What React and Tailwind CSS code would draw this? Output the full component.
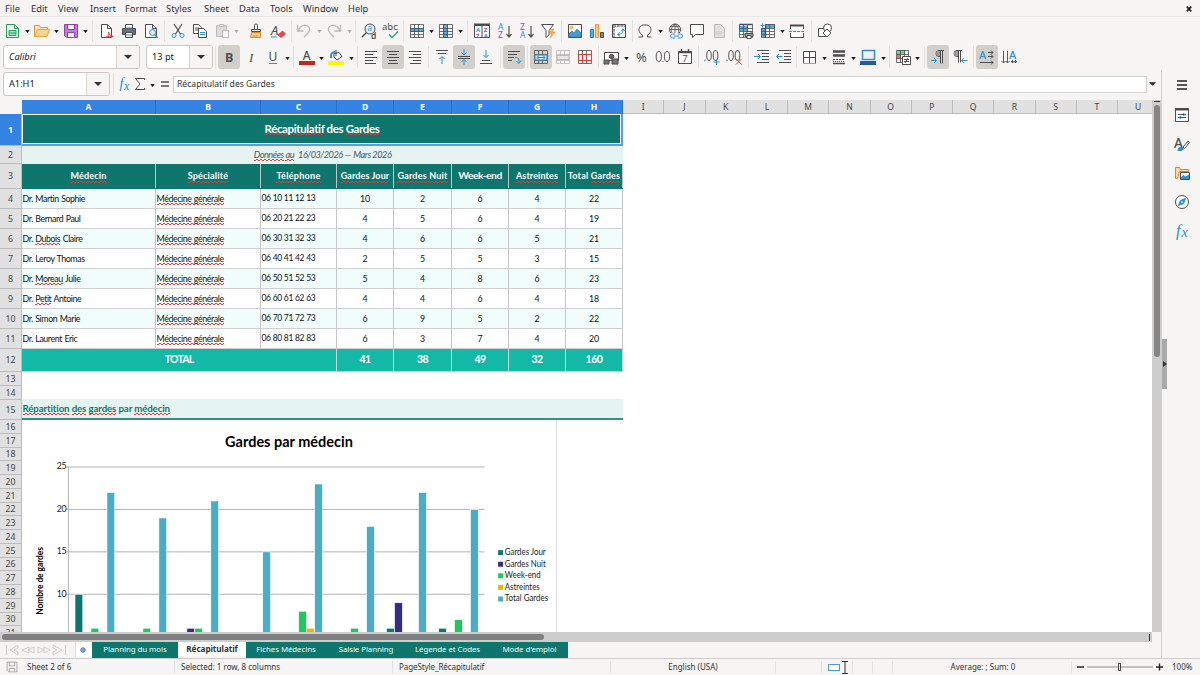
import React from "react";

const D = "#4d4d4f";
const B = "#2f8fd0";
const P = "#a349b8";

function Ic({ children, className = "" }) {
  return (
    <svg viewBox="0 0 16 16" className={"h-4 w-4 shrink-0 overflow-visible " + className} fill="none" stroke={D} strokeWidth="1">
      {children}
    </svg>
  );
}
function Btn({ on, children, dim, className = "w-[22px]" }) {
  return (
    <div className={"flex h-6 shrink-0 items-center justify-center rounded-[3px] " + className + (on ? " bg-[#d2cfcb]" : "") + (dim ? " opacity-35" : "")}>
      {children}
    </div>
  );
}
function Arr({ dim, className = "w-[7px]" }) {
  return (
    <div className={"flex h-6 shrink-0 items-center justify-center " + className + (dim ? " opacity-30" : "")}>
      <svg viewBox="0 0 6 4" className="mt-0.5 h-[3px] w-[5px]"><path d="M0 0h6L3 4z" fill="#111" /></svg>
    </div>
  );
}
function Sep({ className }) {
  return <div className={"flex h-[22px] shrink-0 justify-center " + className}><div className="w-px bg-[#e2e0de]" /></div>;
}
const T = ({ x, y, s = 8, c = D, f = "Noto Sans, sans-serif", w = 400, i, children }) => (
  <text x={x} y={y} fontSize={s} fill={c} stroke="none" fontFamily={f} fontWeight={w} fontStyle={i ? "italic" : "normal"}>{children}</text>
);
const Grid = ({ c = D }) => <path d="M1.500 1.500h13v13h-13zM1.500 5.500h13M1.500 8.500h13M1.500 11.500h13M5.500 1.500v13M9.500 1.500v13" stroke={c} strokeWidth=".8" />;

function Toolbar1() {
  return (
    <div className="flex h-[27px] shrink-0 items-center pl-0.5">
      <Btn><Ic><path d="M1.500 1.500h8l4 4v9h-12zM9.500 1.500v4h4" stroke="#27a05a" fill="#fff" /><path d="M4 7.500h7v5H4zM4 10h7" stroke="#27a05a" fill="#a6dfb8" /></Ic></Btn><Arr />
      <Btn><Ic><path d="M.5 13.500v-11h5l1 2h7v2" fill="#fbe3bd" stroke="#e09a3c" /><path d="M.7 13.500L3.500 6.500h12l-2.500 7z" fill="#fcd28f" stroke="#e5a34a" /></Ic></Btn><Arr />
      <Btn><Ic><path d="M1.500 1.500h13v13h-11l-2-2z" fill="#c17bd0" stroke="#953fab" /><path d="M4.500 1.500h7v5h-7zM4.500 14v-4.500h7V14" fill="#fff" stroke="#953fab" /></Ic></Btn><Arr />
      <Sep className="w-[7px]" />
      <Btn><Ic><path d="M2.500 1.500h6l4 4v9h-10zM8.500 1.500v4h4" fill="#fff" /><path d="M7 14.500c3-2 3-4 2.500-5.500M9.500 9c.5 2.500 2 4 5 4.500M7 14.500c2-1.500 5-1.500 7-1" stroke="#e0383f" /></Ic></Btn>
      <Btn><Ic><path d="M4.500 5v-3.500h7V5" fill="#fff" /><path d="M1.500 5.500h13v6h-13z" fill="#6c7077" /><path d="M4.500 9.500h7v5h-7z" fill="#fff" /><path d="M5 12h6M5 5h6" stroke={B} /></Ic></Btn>
      <Btn><Ic><path d="M2.500 1.500h7l4 4v9h-11zM9.500 1.500v4h4" fill="#fff" /><circle cx="9.500" cy="9.500" r="3" stroke={B} fill="#d9edf9" /><path d="M11.700 11.700l3 3" stroke={B} strokeWidth="1.400" /></Ic></Btn>
      <Sep className="w-[5px]" />
      <Btn><Ic><path d="M4 1l6.500 10M12 1L5.500 11" stroke={D} strokeWidth="1.200" /><circle cx="4" cy="12.500" r="2" stroke={B} /><circle cx="12" cy="12.500" r="2" stroke={B} /></Ic></Btn>
      <Btn><Ic><path d="M1.500 1.500h5l3 3v6h-8zM3 5h4M3 7h4" fill="#fff" /><path d="M6.500 5.500h5l3 3v6h-8z" fill="#fff" /><path d="M8 9.500h5M8 11.500h5" stroke={B} /></Ic></Btn>
      <Btn dim><Ic><path d="M2.500 2.500h10v11h-10z" fill="#aaa" /><path d="M5.500 1.500h4v2h-4zM8.500 7.500h6v7h-6z" fill="#fff" /></Ic></Btn><Arr dim />
      <div className="w-[5px] shrink-0" />
      <Btn><Ic><path d="M6.500 6.500v-4a1.500 1.500 0 013 0v4M3.500 6.500h9v2h-9z" /><path d="M3.500 9.500h9v5h-10zM6 14v-2M9 14v-2" fill="#fbc988" stroke="#e08a2c" /></Ic></Btn>
      <Btn><Ic><T x="1" y="11.500" s="13" i>A</T><path d="M1 14h6" stroke={B} /><path d="M8 12l4.500-4 3 3-4.500 3.500z" fill="#e8484a" stroke="#d6363a" strokeWidth=".8" /></Ic></Btn>
      <Sep className="w-[4px]" />
      <Btn dim><Ic><path d="M1.500 2v6h6M1.500 8C4 4 7 1.500 10.500 2.500c4 1.300 4 5 1.500 7.500l-4 4" strokeWidth="1.300" /></Ic></Btn><Arr dim className="w-2" />
      <Btn dim><Ic><path d="M14.500 2v6h-6M14.500 8C12 4 9 1.500 5.500 2.500c-4 1.300-4 5-1.500 7.500l4 4" strokeWidth="1.300" /></Ic></Btn><Arr dim className="w-2" />
      <Sep className="w-[5px]" />
      <Btn><Ic><circle cx="9" cy="6" r="5" fill="#e3f2fb" /><path d="M5.500 9.500L1 14" strokeWidth="1.500" /><T x="6.300" y="8.300" s="8.500" c={B}>a</T><T x="10" y="15.500" s="8.500" w="600">d</T></Ic></Btn>
      <Btn className="w-[21px]"><Ic><T x="-1" y="7" s="9.500">abc</T><path d="M6 11.500l3 3 6-6" stroke="#27a86b" strokeWidth="1.300" /></Ic></Btn>
      <Sep className="w-[5px]" />
      <Btn><Ic><path d="M1 5h14v4H1z" fill="#55a9e0" stroke="none" /><Grid /></Ic></Btn><Arr />
      <Btn><Ic><path d="M5 1h5v14H5z" fill="#55a9e0" stroke="none" /><Grid /></Ic></Btn><Arr />
      <Sep className="w-[6px]" />
      <Btn className="w-[23px]"><Ic><path d="M.5 2.500h15v12H.5zM8 3v12" fill="#fff" /><path d="M0 1.500h16" strokeWidth="2" /><T x="2" y="8.500" s="6" c={B} w="700">A</T><T x="2" y="14.500" s="6" c={P} w="700">Z</T><T x="9.700" y="8.500" s="6" c={P} w="700">Z</T><T x="9.700" y="14.500" s="6" c={B} w="700">A</T></Ic></Btn>
      <Btn className="w-[23px]"><Ic><T x="1" y="7" s="8.500" c={B}>A</T><T x="1" y="15" s="8.500" c={P}>Z</T><path d="M12 3v11M9.500 11L12 14l2.500-3" strokeWidth="1.200" /></Ic></Btn>
      <Btn className="w-[21px]"><Ic><T x="1" y="7" s="8.500" c={P}>Z</T><T x="1" y="15" s="8.500" c={B}>A</T><path d="M12 3v11M9.500 11L12 14l2.500-3" strokeWidth="1.200" /></Ic></Btn>
      <Btn><Ic><path d="M1.500 1.500h12L9 7.500V12l-3 2.500v-7z" fill="#fff" /><path d="M12 6l-3 5h3l-2 4 5-6h-3l2-3z" fill="#f7b25c" stroke="#e88b28" strokeWidth=".6" /></Ic></Btn>
      <Sep className="w-[5px]" />
      <Btn><Ic><path d="M1.500 1.500h13v13h-13z" fill="#fff" /><path d="M2 14V11l3-3 2 2 3-4 4 4v4z" fill="#3f9bd8" stroke="#2b79b4" strokeWidth=".7" /><circle cx="4.500" cy="4.500" r="1.300" stroke="#e59836" fill="#ffd08a" /></Ic></Btn>
      <Btn><Ic><path d="M1.500 6.500h3v8h-3z" fill="#5cb1e8" stroke="#2b79b4" /><path d="M6.500 1.500h3v13h-3z" fill="#fbc97e" stroke="#e59836" /><path d="M11.500 9.500h3v5h-3z" fill="#888" /></Ic></Btn>
      <Btn><Ic><path d="M1.500 1.500h13v13h-13z" fill="#fff" /><path d="M2 3h12M3 2v12" strokeWidth="2" stroke="#999" strokeDasharray="3 .7" /><path d="M7 11.500c4 0 5-2 5-5M10 8.500L12 6l2 2.500M9 9.500l-2.500 2L9 13.500" stroke={B} /></Ic></Btn>
      <Sep className="w-[4px]" />
      <Btn><Ic><path d="M1.500 14h4v-2C2 10 1.500 7 2.500 4.500 4 1 12 1 13.500 4.500c1 2.500.5 5.500-3 7.500v2h4" /></Ic></Btn><Arr className="w-2" />
      <Btn className="w-[22px]"><Ic><circle cx="8" cy="6.500" r="5.500" /><path d="M2.500 6.500h11M8 1v10M4 3.500h8M5.500 11c-2-3-1.500-7 2.500-10 4 3 4.500 7 2.500 10" strokeWidth=".8" /><path d="M3 10h13v6H3z" fill="#f6f5f4" stroke="none" /><path d="M8 11H5.500a1.700 1.700 0 000 4H8M11 11h2.500a1.700 1.700 0 010 4H11M7 13h5" stroke={B} /></Ic></Btn>
      <Btn><Ic><path d="M1.500 1.500h13v10h-8l-3 3v-3h-2z" fill="#fff" /></Ic></Btn>
      <Btn dim><Ic><path d="M3.500 1.500h6l4 4v9h-10z" fill="#bbb" /><path d="M5 9h6M5 11h6" strokeWidth=".6" /></Ic></Btn>
      <Sep className="w-[5px]" />
      <Btn><Ic><path d="M1 3h9v5H1z" fill="#55a9e0" stroke="none" /><Grid /><path d="M1.500 1.500h13" strokeWidth="1.500" /><path d="M7 10.500h8v3H7z" fill="#9aa3aa" /><path d="M9 8.500h4v2H9zM9 12.500h4v3H9z" fill="#fff" /></Ic></Btn>
      <Btn className="w-[21px]"><Ic><path d="M5 1h10v4H5zM1 5h4v9H1z" fill="#55a9e0" stroke="none" /><Grid /><path d="M5.500 2.500v12" strokeWidth="1.300" /><path d="M0 0h5v5H0z" fill="#f6f5f4" stroke="none" /><path d="M2.500.5v4M.5 2.500h4" stroke={B} /></Ic></Btn><Arr className="w-2" />
      <Btn><Ic><path d="M1.500 6V2.500h13V6M1.500 10v4.500h13V10" fill="#fff" /><path d="M1 2.500h14" strokeWidth="2" /><path d="M0 8.500h16" stroke={B} strokeDasharray="3 1" /></Ic></Btn>
      <Sep className="w-[6px]" />
      <Btn><Ic><path d="M1.500 5.500h7v8h-7z" fill="#fff" /><circle cx="10.500" cy="5" r="4" fill="#fff" /><path d="M6 10l4-4 4 4-4 4z" fill="#fff" /></Ic></Btn>
    </div>
  );
}

function Combo({ text, fieldClass, className }) {
  return (
    <div className={"flex h-[24px] shrink-0 overflow-hidden rounded-[3px] border border-[#cdc7c2] bg-white " + className}>
      <div className={"flex items-center border-r border-[#d9d5d1] pl-[5px] text-[9.200px] leading-none text-[#222] " + fieldClass}>{text}</div>
      <div className="flex flex-1 items-center justify-center bg-[#f6f5f4]">
        <svg viewBox="0 0 8 4" className="h-1 w-2"><path d="M0 0h8L4 4z" fill="#2e3436" /></svg>
      </div>
    </div>
  );
}

const lines = (arr) => arr.map(([a, y, b], i) => <path key={i} d={`M${a} ${y}h${b}`} />);

function Toolbar2() {
  return (
    <div className="flex h-[26px] shrink-0 items-center pl-[3px]">
      <Combo text={<i>Calibri</i>} fieldClass="w-[113px]" className="w-[137px]" />
      <Combo text="13 pt" fieldClass="w-[43px]" className="ml-1.5 w-[67px]" />
      <Sep className="w-[5px]" />
      <Btn on><Ic><T x="3.900" y="12.600" s="12.500" w="700">B</T></Ic></Btn>
      <Btn><Ic><T x="6" y="12.500" s="13" i f="Liberation Serif, serif">I</T></Ic></Btn>
      <Btn className="w-[21px]"><Ic><T x="3.500" y="12" s="12">U</T><path d="M4 14.500h8" stroke={B} /></Ic></Btn><Arr className="w-2" />
      <Sep className="w-[5px]" />
      <Btn className="w-[21px]"><Ic><T x="3.800" y="11" s="12" w="500">A</T><path d="M0 14h16" stroke="#c2261d" strokeWidth="4" /></Ic></Btn><Arr className="w-[8px]" />
      <Btn><Ic><path d="M6 4.500l5-1 3 4-5 3.500-3-3zM8 1v6" fill="#fff" /><path d="M7 3C4 3 2.500 5 3 9" stroke={B} strokeWidth="2" /><path d="M0 14h16" stroke="#fdf500" strokeWidth="4" /></Ic></Btn><Arr className="w-2" />
      <Sep className="w-[5px]" />
      <Btn><Ic>{lines([[2, 2.5, 12], [2, 5.5, 8], [2, 8.5, 12], [2, 11.5, 8], [2, 14.5, 11]])}</Ic></Btn>
      <Btn on><Ic>{lines([[2, 2.5, 12], [4, 5.5, 8], [2, 8.5, 12], [4, 11.5, 8], [3, 14.5, 10]])}</Ic></Btn>
      <Btn><Ic>{lines([[2, 2.5, 12], [6, 5.5, 8], [2, 8.5, 12], [6, 11.5, 8], [3, 14.5, 11]])}</Ic></Btn>
      <Sep className="w-[5px]" />
      <Btn><Ic>{lines([[2, 1.5, 12], [4, 4.5, 8]])}<path d="M8 15V8M5.500 10L8 7.500l2.500 2.500" stroke={B} /></Ic></Btn>
      <Btn on><Ic>{lines([[2, 7.5, 12], [2, 9.5, 12]])}<path d="M8 0v5.500M5.500 3.500L8 6l2.500-2.500M8 16v-5M5.500 13L8 10.500l2.500 2.500" stroke={B} /></Ic></Btn>
      <Btn><Ic>{lines([[4, 11.5, 8], [2, 14.5, 12]])}<path d="M8 1v7M5.500 6L8 8.500 10.500 6" stroke={B} /></Ic></Btn>
      <Sep className="w-[6px]" />
      <Btn on><Ic>{lines([[2, 2.5, 12], [2, 5.5, 9], [2, 8.5, 6], [2, 11.5, 4]])}<path d="M9 8.500c4 0 4 1 4 5M10.500 12l2.500 2.500 2-3" stroke={B} /></Ic></Btn>
      <Sep className="w-[5px]" />
      <Btn on><Ic><Grid /><path d="M2 6h12v5H2z" fill="#cfe8f8" stroke={B} /><path d="M4 8.500h8M6 6.500l-2 2 2 2M10 6.500l2 2-2 2" stroke={B} /></Ic></Btn>
      <Btn dim><Ic><Grid /><path d="M2 6.500h12v4H2z" fill="#ccc" /></Ic></Btn>
      <Btn><Ic><Grid /><path d="M1.500 5.500h13v6h-13zM5.500 5v7M9.500 5v7" fill="#fff" stroke="#dc3c3c" /></Ic></Btn>
      <Sep className="w-[4px]" />
      <Btn><Ic><path d="M1.500 3.500h14v8h-14z" fill="#fff" /><circle cx="8.500" cy="7.500" r="2.200" fill="#666" /><path d="M1 11h5v4H1zM9 10h6v5H9z" fill="#777" /></Ic></Btn><Arr className="w-[9px]" />
      <Btn className="w-[21px]"><Ic><T x="2" y="12.600" s="13">%</T></Ic></Btn>
      <Btn><Ic><ellipse cx="3.800" cy="7.500" rx="2.600" ry="5" /><ellipse cx="12" cy="7.500" rx="2.600" ry="5" /><path d="M7.500 12.500h1" /></Ic></Btn>
      <Btn><Ic><path d="M1.500 2.500h13v12h-13z" fill="#fff" /><path d="M1.500 3.500h13M4.500 0v3M11.500 0v3" strokeWidth="1.500" /><T x="5.300" y="13" s="9.500">7</T></Ic></Btn>
      <Sep className="w-[5px]" />
      <Btn><Ic><ellipse cx="5" cy="6.500" rx="2.300" ry="5" /><ellipse cx="11.500" cy="6.500" rx="2.300" ry="5" /><path d="M.5 11.500h1" strokeWidth="1.300" /><path d="M9.500 13h6M12.500 10v6" stroke={B} /></Ic></Btn>
      <Btn><Ic><ellipse cx="5" cy="6.500" rx="2.300" ry="5" /><ellipse cx="11.500" cy="6.500" rx="2.300" ry="5" /><path d="M.5 11.500h1" strokeWidth="1.300" /><path d="M10 10l5.500 5.500M15.500 10L10 15.500" stroke="#e0383f" /></Ic></Btn>
      <Sep className="w-[6px]" />
      <Btn><Ic>{lines([[3, 1.5, 12], [8, 4.5, 7], [8, 7.5, 7], [8, 10.5, 7], [3, 13.5, 12]])}<path d="M0 7.500h6M4 5l2.500 2.500L4 10" stroke={B} /></Ic></Btn>
      <Btn><Ic>{lines([[3, 1.5, 12], [8, 4.5, 7], [8, 7.5, 7], [8, 10.5, 7], [3, 13.5, 12]])}<path d="M.5 7.500h6M3 5L.5 7.500 3 10" stroke={B} /></Ic></Btn>
      <Sep className="w-[3px]" />
      <Btn><Ic><path d="M2.500 2.500h12v12h-12zM8.500 2.500v12M2.500 8.500h12" fill="#fff" /><path d="M2 14.500h13" stroke="#e59836" /></Ic></Btn><Arr className="w-2" />
      <Btn><Ic><path d="M2 2.500h12M2 6.500h12" strokeWidth="2.500" /><path d="M2 10.500h12" strokeDasharray="2 1" /><path d="M2 12.500h12" strokeDasharray="1 1" /><path d="M2 14.500h12" strokeWidth="1.500" /></Ic></Btn><Arr />
      <Btn><Ic><path d="M2.500 1.500h12v9h-12z" fill="#eef3f7" stroke="#3d8bc6" strokeWidth="1.500" /><path d="M0 14h16" stroke="#215d9b" strokeWidth="4" /></Ic></Btn><Arr className="w-2" />
      <Sep className="w-[5px]" />
      <Btn><Ic><path d="M2 1h8v4H2z" fill="#74d391" stroke="none" /><path d="M2 5h4v5H2z" fill="#f07070" stroke="none" /><path d="M1.500 1.500h12v12h-12zM1.500 5.500h12M1.500 9.500h12M5.500 1.500v12M9.500 1.500v12" strokeWidth=".8" /><path d="M7.500 7.500h8v8h-8z" fill="#fff" /><path d="M9 10.500h5M9 12.500h5M13 9l-3 5" /></Ic></Btn><Arr />
      <Sep className="w-[6px]" />
      <Btn on><Ic><path d="M14 1.500H9a3 3 0 000 6h1M10.500 1.500v13M12.500 1.500v13" /><path d="M7 2a3 3 0 003 5V2z" fill="#999" stroke="none" /><path d="M1 11.500h5M4 9l2.500 2.500L4 14" stroke={B} /></Ic></Btn>
      <Btn><Ic><path d="M10 1.500H5a3 3 0 000 6h1M6.500 1.500v12M8.500 1.500v12" /><path d="M3 2a3 3 0 003 5V2z" fill="#999" stroke="none" /><path d="M9.500 11.500h6M12 9l-2.500 2.500L12 14" stroke={B} /></Ic></Btn>
      <Sep className="w-[5px]" />
      <Btn on><Ic><T x="0" y="9.500" s="11" c={B} w="500">A</T><path d="M9 3.500h5M9 7.500h5M1 13.500h13M12 1.500l2 2-2 2M12 5.500l2 2-2 2M12 11.500l2 2-2 2" /></Ic></Btn>
      <Btn><Ic><T x="8" y="9.500" s="11" c={B} w="500">A</T><path d="M2.500 2v12M6.500 2v12M11.500 11v3M14.500 11v3M.5 12l2 2 2-2M4.800 12l1.700 2 2-2M10 12l1.500 2 1.500-2 1.500 2 1.500-2" strokeWidth=".9" /></Ic></Btn>
    </div>
  );
}

const COLS = [["A", "w-[134px]"], ["B", "w-[105px]"], ["C", "w-[76px]"], ["D", "w-[57px]"], ["E", "w-[58px]"], ["F", "w-[57px]"], ["G", "w-[57px]"], ["H", "w-[57px]"]];
const DATA = [
  ["Martin Sophie", "06 10 11 12 13", 10, 2, 6, 4, 22],
  ["Bernard Paul", "06 20 21 22 23", 4, 5, 6, 4, 19],
  ["*Dubois Claire", "06 30 31 32 33", 4, 6, 6, 5, 21],
  ["Leroy Thomas", "06 40 41 42 43", 2, 5, 5, 3, 15],
  ["*Moreau Julie", "06 50 51 52 53", 5, 4, 8, 6, 23],
  ["*Petit Antoine", "06 60 61 62 63", 4, 4, 6, 4, 18],
  ["Simon Marie", "06 70 71 72 73", 6, 9, 5, 2, 22],
  ["Laurent Eric", "06 80 81 82 83", 6, 3, 7, 4, 20],
];

/* Spell-check squiggle: two dashed 1px rows, offset by half a period. */
const W = ({ children }) => (
  <span className="bg-[linear-gradient(90deg,#e23b3b_50%,transparent_50%),linear-gradient(90deg,#e23b3b_50%,transparent_50%)] bg-[size:4px_1px] bg-[position:0_100%,2px_calc(100%-1px)] bg-repeat-x">{children}</span>
);

function Cell({ i, children, className = "" }) {
  return <div className={"flex h-full shrink-0 items-center border-r whitespace-nowrap " + COLS[i][1] + " " + className}>{children}</div>;
}

const HEADS = [
  [<W>Médecin</W>, "text-[9px] tracking-[0.2px]"], [<W>Spécialité</W>, "text-[9px] tracking-[0.2px]"], [<W>Téléphone</W>, "text-[9px] tracking-[0.3px]"],
  [<W>Gardes Jour</W>, "text-[9px] tracking-[0.1px]"], [<W>Gardes Nuit</W>, "text-[9px] tracking-[0.2px]"], ["Week-end", "text-[10.300px] tracking-[-0.5px] pb-px"],
  [<W>Astreintes</W>, "text-[9px] tracking-[0.1px]"], [<>Total&nbsp;<W>Gardes</W></>, "text-[9px] tracking-[0.2px]"],
];

function RowHead({ n, className = "h-5" }) {
  return <div className={"flex w-[22px] shrink-0 items-center justify-center border-r border-b border-[#bdbdbd] pt-[1.500px] text-[8.800px] leading-none " + className + (n === 1 ? " bg-[#3584e4] font-bold text-white" : " bg-[#e1e1e1] text-[#444]")}>{n}</div>;
}

const SERIES = [["Gardes Jour", "#0f766e"], ["Gardes Nuit", "#312e81"], ["Week-end", "#22c55e"], ["Astreintes", "#eab308"], ["Total Gardes", "#4bacc6"]];

function Chart() {
  const y = (v) => 46.9 + (25 - v) * 8.5;
  return (
    <svg viewBox="0 0 535 212" className="h-[212px] w-[535px] border-r border-[#e3e3e3] bg-white font-['Lato',sans-serif]">
      <text x="267.500" y="27" textAnchor="middle" fontSize="15.500" fontWeight="700" textLength="128" lengthAdjust="spacingAndGlyphs">Gardes par médecin</text>
      {[25, 20, 15, 10].map((v) => (
        <g key={v}>
          <path d={`M44 ${y(v)}H463.500`} stroke="#b3b3b3" />
          <text x="44.500" y={y(v) + 2.5} textAnchor="end" fontSize="8.800" fill="#222" letterSpacing="-.2">{v}</text>
        </g>
      ))}
      <path d="M46.500 47V212" stroke="#b3b3b3" />
      {DATA.map((d, c) => d.slice(2).map((v, s) => v > 5 && (
        <rect key={c + "-" + s} x={53.1 + c * 52.03 + s * 8} y={y(v)} width="7.800" height={220 - y(v)} fill={SERIES[s][1]} stroke="#fff" strokeWidth=".6" />
      )))}
      <text transform="translate(21.500 195) rotate(-90)" fontSize="8.500" fontWeight="700" textLength="68">Nombre de gardes</text>
      {SERIES.map(([n, c], i) => (
        <g key={n}>
          <rect x="477" y={130.200 + i * 11.6} width="5" height="5" fill={c} />
          <text x="483.700" y={135 + i * 11.6} fontSize="8.900" fill="#222" textLength={[41, 41, 36, 35, 43.5][i]} lengthAdjust="spacingAndGlyphs">{n}</text>
        </g>
      ))}
    </svg>
  );
}

const LETTERS = "IJKLMNOPQRSTU".split("");
const LOW = [16, 17, 18, 19, 20, 21, 22, 23, 24, 25, 26, 27, 28, 29, 30, 31];

function Sheet() {
  return (
    <div className="flex h-[532px] flex-col overflow-hidden bg-white">
      <div className="flex h-[14px] shrink-0 text-[8.500px] leading-none">
        <div className="w-[22px] shrink-0 bg-[#f6f5f4]" />
        {COLS.map(([l, w]) => <div key={l} className={"flex shrink-0 items-center justify-center border-r border-[#2a6fc4] bg-[#3584e4] pt-px font-bold text-white " + w}>{l}</div>)}
        {LETTERS.map((l) => <div key={l} className="flex w-[41.250px] shrink-0 items-center justify-center border-r border-b border-[#bdbdbd] bg-[#e1e1e1] pt-[2px] text-[#444]">{l}</div>)}
      </div>
      <div className="flex">
        <div className="shrink-0">
          <RowHead n={1} className="h-8" /><RowHead n={2} className="h-[18px]" /><RowHead n={3} className="h-[25px]" />
          {[4, 5, 6, 7, 8, 9, 10, 11].map((n) => <RowHead key={n} n={n} />)}
          <RowHead n={12} className="h-[23px]" /><RowHead n={13} className="h-[14px]" /><RowHead n={14} className="h-[14px]" /><RowHead n={15} />
          {LOW.map((n) => <RowHead key={n} n={n} className="h-[13.770px]" />)}
        </div>
        <div className="w-[601px] shrink-0 font-['Lato',sans-serif] text-[#111]">
          <div className="flex h-8 items-center justify-center border-r-2 border-b-2 border-[#5b9be8] bg-[#0f766e] text-[11.500px] font-bold text-white ring-1 ring-white ring-inset">
            <span className="pl-px tracking-[-0.370px]"><W>Récapitulatif</W> des <W>Gardes</W></span>
          </div>
          <div className="flex h-[18px] items-center justify-center bg-[#e6f4f1] pb-px text-[9.200px] tracking-[-0.480px] text-[#4b5563] italic"><W>Données</W>&nbsp;<W>au</W><span className="ml-1">16/03/2026</span>&nbsp;<span className="mr-px">—</span>&nbsp;Mars 2026</div>
          <div className="flex h-[25px] bg-[#0f766e] pb-px font-bold text-white">
            {HEADS.map(([t, c], i) => <Cell key={i} i={i} className={"justify-center border-[#b9c9c7] " + c}>{t}</Cell>)}
          </div>
          {DATA.map((d, r) => {
            const star = d[0][0] === "*";
            const [first, last] = d[0].replace("*", "").split(" ");
            return (
              <div key={r} className={"flex h-5 border-b border-[#d0d0d0] text-[8.800px] " + (r % 2 ? "bg-white" : "bg-[#f0fdfa]")}>
                <Cell i={0} className="border-[#c6c6c6] pl-[0.500px] tracking-[-0.400px] [word-spacing:0.600px]">Dr.&nbsp;{star ? <W>{first}</W> : first}&nbsp;{last}</Cell>
                <Cell i={1} className="border-[#c6c6c6] pl-[0.500px] tracking-[-0.380px] [word-spacing:0.400px]"><W>Médecine générale</W></Cell>
                <Cell i={2} className="border-[#c6c6c6] pl-[0.500px] text-[8.500px] tracking-[-0.400px] [word-spacing:0.350px]">{d[1]}</Cell>
                {d.slice(2).map((v, k) => <Cell key={k} i={k + 3} className="justify-center border-[#c6c6c6] tracking-[-0.200px]">{v}</Cell>)}
              </div>
            );
          })}
          <div className="flex h-[23px] border-b border-[#b8d5d1] bg-[#14b8a6] text-[10.500px] font-bold tracking-[-0.500px] text-white">
            <div className="flex w-[315px] items-center justify-center border-r border-[#b9dcd7] pb-px tracking-[-0.800px]">TOTAL</div>
            {[41, 38, 49, 32, 160].map((v, k) => <Cell key={k} i={k + 3} className="justify-center border-[#b9dcd7] pb-px">{v}</Cell>)}
          </div>
          <div className="h-[27px]" />
          <div className="flex h-[21px] items-center border-b-2 border-[#2f9189] bg-[#e6f4f1] pb-px pl-[0.500px] text-[9.700px] font-bold tracking-[-0.120px] text-[#0f766e]">
            <W>Répartition</W>&nbsp;<W>des</W>&nbsp;<W>gardes</W>&nbsp;par&nbsp;<W>médecin</W>
          </div>
          <Chart />
        </div>
      </div>
    </div>
  );
}

export default function App() {
  return (
    <div className="flex h-[675px] w-[1200px] flex-col overflow-hidden bg-[#f6f5f4] font-['Noto_Sans',sans-serif] text-[#333]">
      <div className="flex h-[17px] shrink-0 items-center border-b border-[#e8e7e5] pt-[2px] pl-[5px] text-[9.350px] leading-none">
        <span className="w-[26px]">File</span><span className="w-[27px]">Edit</span><span className="w-8">View</span><span className="w-[35px]">Insert</span><span className="w-[41px]">Format</span><span className="w-[38px]">Styles</span><span className="w-[35px]">Sheet</span><span className="w-[31px]">Data</span><span className="w-[33px]">Tools</span><span className="w-[45px]">Window</span><span>Help</span>
        <svg viewBox="0 0 6 6" className="mr-2 ml-auto h-[6px] w-[6px]"><path d="M.7.7l4.600 4.600M5.300.7L.7 5.300" stroke="#222" strokeWidth="1.700" /></svg>
      </div>
      <Toolbar1 />
      <Toolbar2 />
      <div className="flex min-h-0 flex-1">
        <div className="flex w-[1161px] shrink-0 flex-col">
          <div className="flex h-[30px] shrink-0 items-center pb-[2px] pl-[3px]">
            <Combo text="A1:H1" fieldClass="w-[83px]" className="w-[107px]" />
            <Sep className="w-[6px]" />
            <Btn className="w-[17px]"><Ic><T x="2.500" y="12" s="14.500" c={B} i f="Liberation Serif, serif">f</T><T x="7" y="13.500" s="12" c={B} i f="Liberation Serif, serif">x</T></Ic></Btn>
            <Btn className="w-[14px]"><Ic><path d="M12.500 4V2.500h-9L8 8l-4.500 5.500h9V12" /></Ic></Btn>
            <Arr className="w-[10px]" />
            <Btn className="w-[15px]"><Ic><path d="M4 6h8M4 10h8" strokeWidth="1.600" /></Ic></Btn>
            <div className="ml-px flex h-[17px] w-[974px] items-center border border-[#d5d2cf] bg-white pt-px pl-[3px] text-[8.600px] leading-none">Récapitulatif des Gardes</div>
            <div className="flex w-[11px] justify-center"><svg viewBox="0 0 8 4" className="h-1 w-[7px]"><path d="M0 0h8L4 4z" fill="#222" /></svg></div>
          </div>
          <div className="flex h-[532px] shrink-0">
            <div className="w-[1152px] overflow-hidden"><Sheet /></div>
            <div className="flex w-[9px] flex-col items-center bg-[#cdcdcd] pt-px">
              <div className="h-px w-[6px] bg-[#333]" />
              <div className="mt-[3px] h-[252px] w-[6px] rounded-full bg-[#858585]" />
            </div>
          </div>
          <div className="flex h-[10px] w-[1152px] shrink-0 items-center bg-[#cdcdcd] pl-0.5">
            <div className="h-[6px] w-[542px] rounded-full bg-[#808080]" />
            <div className="mr-0.5 ml-auto h-[7px] w-px bg-[#333]" />
          </div>
          <div className="flex h-4 shrink-0 text-[7.900px] leading-none tracking-[-0.080px] text-[#f0fafa]">
            <svg viewBox="0 0 62 14" className="mt-px ml-[5px] h-[14px] w-[62px]" fill="none" stroke="#cfccc9">
              <path d="M1.500 2v10M13 2L5 7l8 5V9l-4-2 4-2zM24 4l-7 3 7 3zM29 4l-6 3 6 3zM33 4l6 3-6 3zM39 4l6 3-6 3zM48 2l9 5-9 5V9l4-2-4-2zM60.500 2v10" />
            </svg>
            <div className="ml-2 flex h-[15px] w-[17px] items-center justify-center border-l border-[#ddd] bg-white">
              <svg viewBox="0 0 6 6" className="mr-[2px] h-[6px] w-[6px]"><circle cx="3" cy="3" r="2.200" fill="none" stroke="#2a5db8" /><path d="M3 1v4M1 3h4" stroke="#2a5db8" strokeWidth=".7" /></svg>
            </div>
            <div className="flex w-[86px] items-center justify-center bg-[#0f766e]">Planning du mois</div>
            <div className="flex h-[14px] w-[68px] items-center justify-center bg-white text-[8.200px] font-bold text-[#333]">Récapitulatif</div>
            <div className="flex w-[80px] items-center justify-center bg-[#0f766e]">Fiches Médecins</div>
            <div className="flex w-[80px] items-center justify-center bg-[#0f766e]">Saisie Planning</div>
            <div className="flex w-[83px] items-center justify-center bg-[#0f766e]">Légende et Codes</div>
            <div className="flex w-[79px] items-center justify-center bg-[#0f766e] pl-0.5">Mode d'emploi</div>
          </div>
        </div>
        <div className="flex flex-1 border-l border-[#d3d0cd]">
          <div className="mt-[269px] flex h-[50px] w-[5px] items-center justify-center bg-[#a9a9a9]"><svg viewBox="0 0 4 6" className="h-[6px] w-1"><path d="M0 0l4 3-4 3z" fill="#333" /></svg></div>
          <div className="flex flex-1 flex-col items-center gap-[13px] pt-[7px] pr-1">
            <Ic><path d="M3 4h10M3 8h10M3 12h10" stroke="#222" strokeWidth="1.500" /></Ic>
            <Ic className="mt-[1px]"><path d="M1.500 1.500h13v13h-13z" fill="#fff" /><path d="M1 2.500h14" strokeWidth="2" /><path d="M4 7.500h8M4 10.500h8" /><path d="M9 6l2 1.500L9 9M7 9l-2 1.500L7 12" stroke={B} /></Ic>
            <Ic><T x="0" y="11.500" s="13.500" w="500">A</T><path d="M9 11l5-6 1.500 1.500-5 6z" fill="#fff" /><path d="M4 14.500c0-3 3-4 5-2.500 1 2-2 3-5 2.500z" fill={B} stroke={B} /></Ic>
            <Ic><path d="M1.500 13.500v-11h4l1 2h8v2h-9l-2 7z" fill="#fbd5a5" stroke="#e5812c" /><path d="M6.500 7.500h9v7h-9z" fill="#fff" /><path d="M7 14v-2l2.500-2 2 1.500L15 9.500V14z" fill={B} stroke="none" /></Ic>
            <Ic><circle cx="8" cy="8" r="6.500" fill="#fff" /><path d="M11.500 4.500L9.500 9.500l-5 2 2-5z" fill={B} stroke={B} /><path d="M8 7v2" stroke="#fff" /></Ic>
            <Ic><T x="2" y="12.500" s="16.500" c={B} i f="Liberation Serif, serif">f</T><T x="7.500" y="14" s="14" c={B} i f="Liberation Serif, serif">x</T></Ic>
          </div>
        </div>
      </div>
      <div className="flex h-[17px] shrink-0 items-center border-t border-[#cfccc9] pl-[6px] text-[8px] leading-none *:shrink-0">
        <Ic className="h-[12px] w-[12px] opacity-60"><path d="M1.500 1.500h13v13h-11l-2-2zM4.500 1.500v5h7v-5M4.500 14v-4h7v4" /></Ic>
        <span className="ml-[9px] w-[147px]">Sheet 2 of 6</span>
        <span className="flex h-3 w-[218px] items-center border-l border-[#e2e0de] pl-[6px]">Selected: 1 row, 8 columns</span>
        <span className="flex h-3 w-[218px] items-center border-l border-[#e2e0de] pl-[6px] tracking-[-0.080px]">PageStyle_Récapitulatif</span>
        <span className="flex h-3 w-[165px] items-center justify-center border-l border-[#e2e0de]">English (USA)</span>
        <span className="h-3 w-[46px] border-l border-[#e2e0de]" />
        <span className="flex h-3 w-[31px] items-center gap-[2px] border-l border-[#e2e0de] pl-[6px]">
          <span className="h-[7px] w-[12px] shrink-0 border border-[#4a9bd1] bg-white" />
          <svg viewBox="0 0 6 13" className="h-[13px] w-[6px] shrink-0" fill="none" stroke="#333"><path d="M0 .5h6M0 12.500h6M3 1v11" /></svg>
        </span>
        <span className="h-3 w-5 border-l border-[#e2e0de]" />
        <span className="h-3 w-5 border-l border-[#e2e0de]" />
        <span className="flex h-3 w-[179px] items-center justify-center border-l border-[#e2e0de] pl-[2px]">Average: ; Sum: 0</span>
        <span className="flex h-3 w-[97px] items-center border-l border-[#e2e0de] pl-[5px]">
          <svg viewBox="0 0 86 8" className="h-2 w-[86px]" fill="none"><path d="M0 4h7M79 4h7M82.500.5v7" stroke="#222" strokeWidth="1.400" /><path d="M10 4h66" stroke="#8b8b8b" /><path d="M41.500.5h2v7h-2z" fill="#fff" stroke="#444" /></svg>
        </span>
        <span className="ml-[4px]">100%</span>
      </div>
    </div>
  );
}
